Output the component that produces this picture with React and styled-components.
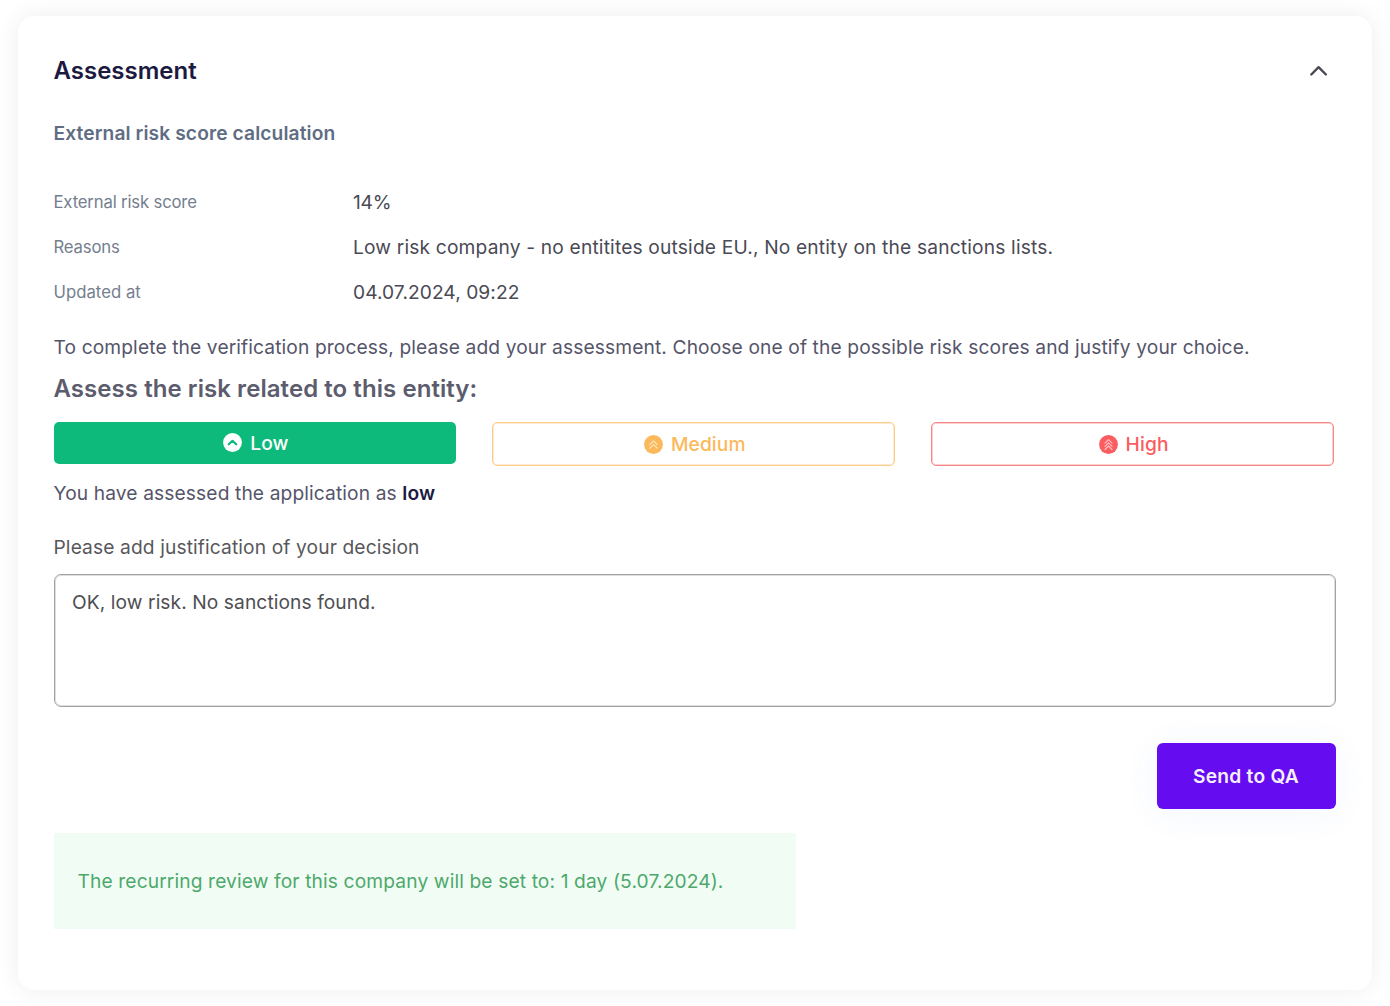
import React, { useState } from "react";
import styled, { createGlobalStyle } from "styled-components";

const GlobalStyle = createGlobalStyle`
  * { box-sizing: border-box; }
  body {
    margin: 0;
    background: #fff;
    font-family: Inter, "Liberation Sans", sans-serif;
    font-size: 19.2px;
    color: #4b4b57;
  }
`;

const Page = styled.main`
  display: flex;
  height: 1006px;
  padding: 16px 18.5px 16px 17.5px;
  overflow: hidden;
`;

const Card = styled.section`
  flex: 1;
  display: flex;
  flex-direction: column;
  padding: 39px 36px 0;
  background: #fff;
  border-radius: 16px;
  box-shadow: 0 0 24px rgba(0, 0, 0, 0.07);
`;

const Header = styled.header`
  display: flex;
  align-items: center;
  justify-content: space-between;
  height: 32px;
`;

const Title = styled.h2`
  margin: 0;
  font-size: 24px;
  font-weight: 600;
  line-height: 32px;
  color: #1c1a41;
`;

const Toggle = styled.button`
  display: flex;
  padding: 0;
  margin-right: 7px;
  border: 0;
  background: none;
`;

const Subtitle = styled.h3`
  margin: 34px 0 35px;
  font-size: 19.2px;
  font-weight: 600;
  line-height: 24px;
  letter-spacing: 0.1px;
  color: #5f6d84;
`;

const Details = styled.dl`
  display: grid;
  grid-template-columns: 299.5px 1fr;
  grid-auto-rows: 45px;
  align-items: center;
  margin: 0;
`;

const Term = styled.dt`
  padding-bottom: 1px;
  font-size: 16.7px;
  line-height: 24px;
  letter-spacing: ${(p) => p.$spacing};
  color: #747e8e;
`;

const Value = styled.dd`
  margin: 0;
  padding-bottom: 1px;
  line-height: 24px;
  letter-spacing: ${(p) => p.$spacing};
  color: #4a4a55;
`;

const Text = styled.p`
  margin: ${(p) => p.$margin || "0"};
  line-height: 26px;
  letter-spacing: 0.115px;
  color: ${(p) => p.$color || "#55556a"};

  strong {
    font-weight: 600;
    color: #1c1a41;
  }
`;

const Question = styled.h3`
  margin: 13px 0 17px;
  font-size: 24px;
  font-weight: 600;
  line-height: 32px;
  letter-spacing: 0.06px;
  color: #5c5c6e;
`;

const Choices = styled.div`
  display: grid;
  grid-template-columns: repeat(3, 1fr);
  align-items: start;
  gap: 36px;
  height: 44px;
  margin-right: 1.5px;
`;

const Choice = styled.button`
  display: flex;
  align-items: center;
  justify-content: center;
  gap: 8px;
  height: ${(p) => (p.$selected ? "42px" : "44px")};
  padding: ${(p) => (p.$selected ? "0 0 1px 2px" : "0 0 0 2px")};
  border: ${(p) => (p.$selected ? "0" : `1px solid ${p.$border}`)};
  border-radius: 5px;
  box-shadow: ${(p) => (p.$selected ? "none" : `inset 0 0 0 1px ${p.$border}66`)};
  background: ${(p) => (p.$selected ? p.$tone : "#fff")};
  color: ${(p) => (p.$selected ? "#fff" : p.$tone)};
  font: 500 19.2px Inter, "Liberation Sans", sans-serif;
  letter-spacing: 0.1px;
`;

const Justification = styled.textarea`
  display: block;
  width: 100%;
  height: 133px;
  padding: 14px 17.5px;
  border: 1px solid #a3a3a3;
  border-radius: 7px;
  box-shadow: inset 0 0 0 1px rgba(163, 163, 163, 0.35);
  outline: 0;
  resize: none;
  background: #fff;
  color: #4e4e52;
  font: 400 19.2px/26px Inter, "Liberation Sans", sans-serif;
  letter-spacing: 0.08px;
`;

const Actions = styled.div`
  display: flex;
  justify-content: flex-end;
  margin: 36px 0 24px;
`;

const Submit = styled.button`
  width: 179px;
  height: 66px;
  padding: 0;
  border: 0;
  border-radius: 6px;
  background: #660cf1;
  color: #f6effe;
  font: 600 19.2px Inter, "Liberation Sans", sans-serif;
  letter-spacing: 0.24px;
  box-shadow: 0 4px 36px rgba(40, 110, 220, 0.06);
`;

const Notice = styled.div`
  display: flex;
  align-items: center;
  width: 742px;
  height: 96px;
  padding: 0 24px;
  background: #f1fdf4;
  color: #4ea86c;
  letter-spacing: 0.122px;
`;

const CHEVRONS = {
  low: ["M5.8 11.3 9.5 7.8l3.7 3.5"],
  medium: ["M5.8 9.6 9.5 6l3.7 3.6", "M5.8 13.2l3.7-3.6 3.7 3.6"],
  high: ["M6 8.1 9.5 4.6 13 8.1", "M6 11.3l3.5-3.5 3.5 3.5", "M6 14.5 9.5 11l3.5 3.5"],
};

function LevelIcon({ level, stroke, width }) {
  return (
    <svg width="19" height="19" viewBox="0 0 19 19" fill="none">
      <circle cx="9.5" cy="9.5" r="9.4" fill="currentColor" />
      {CHEVRONS[level].map((d) => (
        <path key={d} d={d} stroke={stroke} strokeWidth={width} strokeLinecap="round" strokeLinejoin="round" />
      ))}
    </svg>
  );
}

const LEVELS = [
  { id: "low", label: "Low", tone: "#0dba7c", border: "#0dba7c", stroke: "#0dba7c", width: 2.2 },
  { id: "medium", label: "Medium", tone: "#fcb95b", border: "#fccd8a", stroke: "#ffe4b8", width: 1.2 },
  { id: "high", label: "High", tone: "#fb5c5f", border: "#f58688", stroke: "#ffc0c0", width: 1.2 },
];

const DETAILS = [
  { term: "External risk score", value: "14%", termSpacing: "-0.16px", spacing: "-0.2px" },
  {
    term: "Reasons",
    value: "Low risk company - no entitites outside EU., No entity on the sanctions lists.",
    termSpacing: "-0.14px",
    spacing: "0.162px",
  },
  { term: "Updated at", value: "04.07.2024, 09:22", termSpacing: "0.03px", spacing: "0.06px" },
];

export default function App() {
  const [level, setLevel] = useState("low");
  return (
    <>
      <GlobalStyle />
      <Page>
        <Card>
          <Header>
            <Title>Assessment</Title>
            <Toggle aria-label="Collapse">
              <svg width="20" height="20" viewBox="0 0 20 20" fill="none">
                <path d="M2.300 13.500 9.600 6.200l7.300 7.300" stroke="#4a4a55" strokeWidth="2.400" strokeLinecap="round" strokeLinejoin="round" />
              </svg>
            </Toggle>
          </Header>
          <Subtitle>External risk score calculation</Subtitle>
          <Details>
            {DETAILS.map(({ term, value, termSpacing, spacing }) => (
              <React.Fragment key={term}>
                <Term $spacing={termSpacing}>{term}</Term>
                <Value $spacing={spacing}>{value}</Value>
              </React.Fragment>
            ))}
          </Details>
          <Text $margin="19px 0 0">
            To complete the verification process, please add your assessment. Choose one of the possible risk scores and justify your choice.
          </Text>
          <Question>Assess the risk related to this entity:</Question>
          <Choices>
            {LEVELS.map((l) => (
              <Choice key={l.id} $selected={l.id === level} $tone={l.tone} $border={l.border} onClick={() => setLevel(l.id)}>
                <LevelIcon level={l.id} stroke={l.stroke} width={l.width} />
                {l.label}
              </Choice>
            ))}
          </Choices>
          <Text $margin="14px 0 28px">
            You have assessed the application as <strong>{level}</strong>
          </Text>
          <Text as="label" htmlFor="justification" $margin="0 0 14px" $color="#58585c">
            Please add justification of your decision
          </Text>
          <Justification id="justification" defaultValue="OK, low risk. No sanctions found." />
          <Actions>
            <Submit>Send to QA</Submit>
          </Actions>
          <Notice>The recurring review for this company will be set to: 1 day (5.07.2024).</Notice>
        </Card>
      </Page>
    </>
  );
}
